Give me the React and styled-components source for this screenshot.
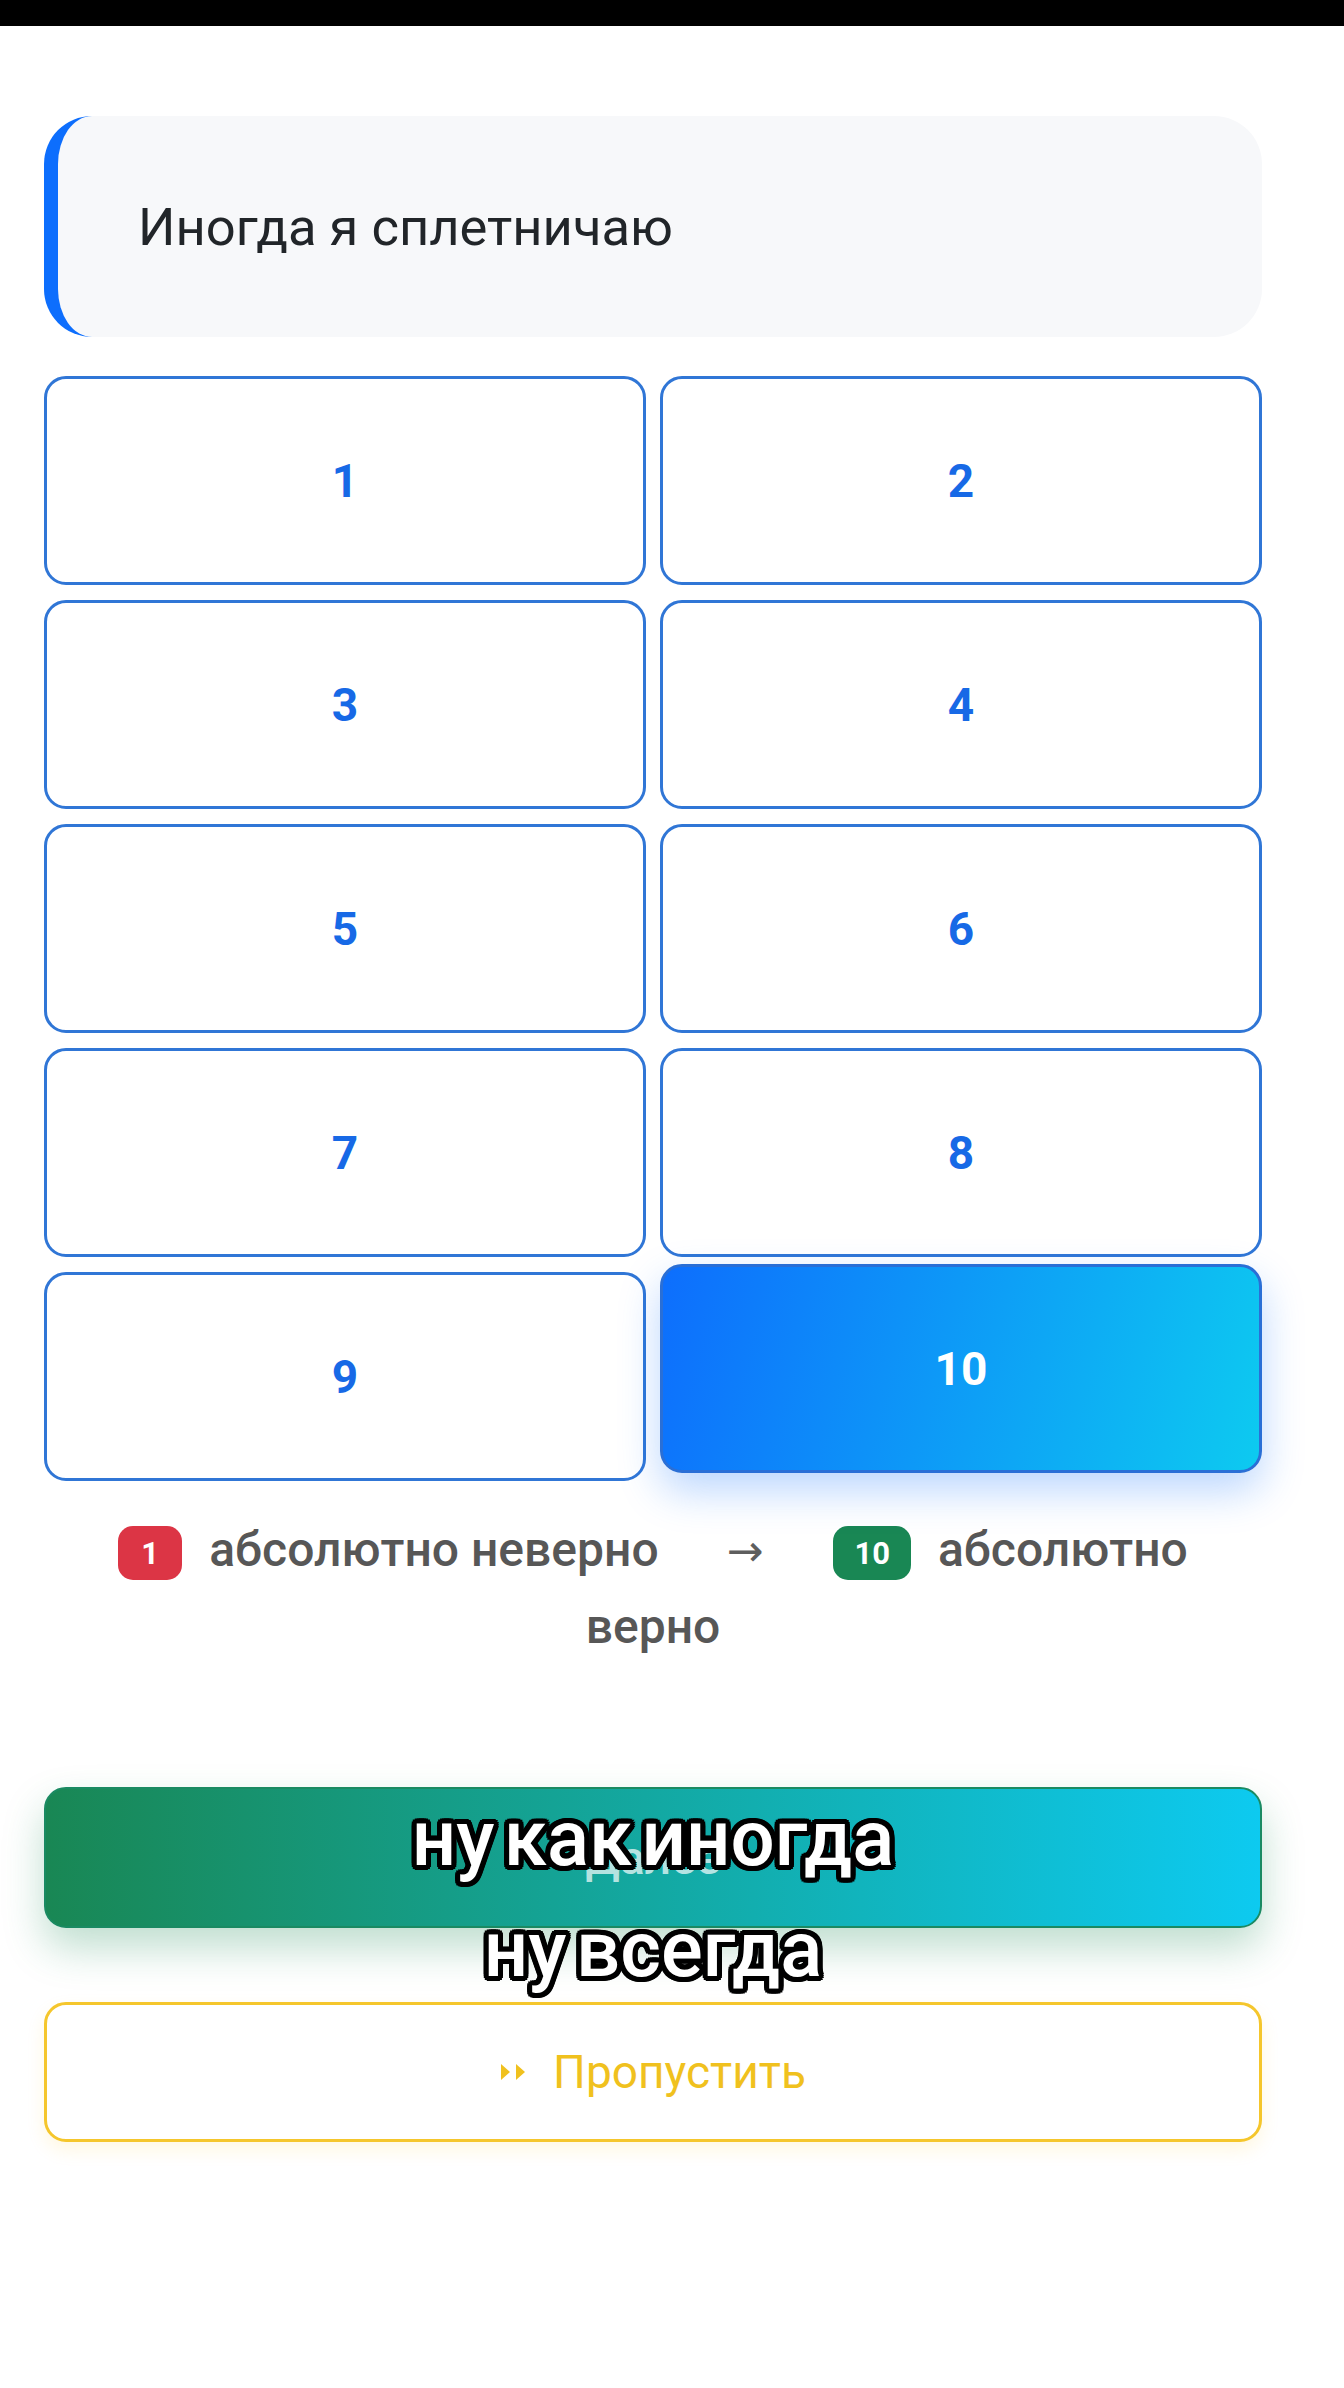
import React from 'react';
import styled, { createGlobalStyle, css } from 'styled-components';

const GlobalStyle = createGlobalStyle`
  html, body {
    margin: 0;
    padding: 0;
    background: #ffffff;
  }
  body {
    font-family: Roboto, 'Noto Sans', 'Liberation Sans', sans-serif;
    color: #212529;
  }
`;

const StatusBar = styled.div`
  height: 26px;
  background: #000;
`;

const Page = styled.div`
  padding: 90px 82px 120px 44px;
`;

const QuestionCard = styled.div`
  box-sizing: border-box;
  height: 221px;
  display: flex;
  align-items: center;
  padding-left: 80px;
  background: #f7f8fa;
  border-left: 14px solid #0d6efd;
  border-radius: 48px;
  font-size: 52.5px;
  color: #212529;
`;

const OptionsGrid = styled.div`
  margin-top: 39px;
  display: grid;
  grid-template-columns: 1fr 1fr;
  column-gap: 14px;
  row-gap: 15px;
`;

const OptionButton = styled.button`
  box-sizing: border-box;
  height: 209px;
  border: 3px solid #3076d6;
  border-radius: 22px;
  background: #fff;
  color: #1769e6;
  font-family: Roboto, sans-serif;
  font-weight: 700;
  font-size: 46px;
  cursor: pointer;

  ${(p) =>
    p.$active &&
    css`
      background: linear-gradient(105deg, #0d6efd 0%, #0dcaf0 100%);
      border-color: #2a6fd6;
      color: #fff;
      transform: translateY(-8px);
      box-shadow: 0 18px 42px rgba(13, 110, 253, 0.28);
    `}
`;

const Legend = styled.div`
  margin-top: 31px;
  padding: 0 40px;
  text-align: center;
  font-size: 48px;
  font-weight: 500;
  line-height: 76px;
  color: #575757;
`;

const Badge = styled.span`
  display: inline-flex;
  align-items: center;
  justify-content: center;
  box-sizing: border-box;
  height: 54px;
  min-width: 64px;
  padding: 0 21px;
  margin-right: 27px;
  border-radius: 15px;
  background: ${(p) => p.$bg};
  color: #fff;
  font-size: 31px;
  font-weight: 700;
  line-height: 1;
  vertical-align: middle;
`;

const Arrow = styled.span`
  display: inline-block;
  margin: 0 58px 0 56px;
  font-family: 'DejaVu Sans', sans-serif;
  font-size: 44px;
  font-weight: 400;
  color: #5e5e5e;
`;

const Actions = styled.div`
  position: relative;
  margin-top: 122px;
  display: flex;
  flex-direction: column;
  gap: 74px;
`;

const NextButton = styled.button`
  box-sizing: border-box;
  height: 141px;
  border: 2px solid #1a8a62;
  border-radius: 22px;
  background: linear-gradient(90deg, #198754 0%, #0dcaf0 100%);
  box-shadow: 0 20px 40px rgba(25, 135, 84, 0.28);
  color: rgba(255, 255, 255, 0.7);
  font-family: Roboto, sans-serif;
  font-size: 46px;
  font-weight: 500;
`;

const SkipButton = styled.button`
  box-sizing: border-box;
  height: 140px;
  display: flex;
  align-items: center;
  justify-content: center;
  gap: 27px;
  border: 3px solid #f5c62c;
  border-radius: 22px;
  background: #fff;
  box-shadow: 0 8px 18px rgba(255, 193, 7, 0.12);
  color: #f0c11e;
  font-family: Roboto, sans-serif;
  font-size: 46px;
  font-weight: 400;
`;

/* video caption lying over the buttons */
const Caption = styled.div`
  position: absolute;
  top: -4px;
  left: 0;
  right: 0;
  text-align: center;
  pointer-events: none;
  font-family: Roboto, sans-serif;
  font-weight: 500;
  font-size: 78px;
  line-height: 111px;
  word-spacing: -10px;
  color: #fff;
  text-shadow:
    5px 0 0 #000, -5px 0 0 #000, 0 5px 0 #000, 0 -5px 0 #000,
    4px 4px 0 #000, -4px 4px 0 #000, 4px -4px 0 #000, -4px -4px 0 #000,
    5px 2px 0 #000, -5px 2px 0 #000, 5px -2px 0 #000, -5px -2px 0 #000,
    2px 5px 0 #000, -2px 5px 0 #000, 2px -5px 0 #000, -2px -5px 0 #000;
`;

const SkipIcon = () => (
  <svg width="26" height="18" viewBox="0 0 26 18" fill="#f0c11e">
    <polygon points="1,1 10,9 1,17" />
    <polygon points="16,1 25,9 16,17" />
  </svg>
);

const options = [1, 2, 3, 4, 5, 6, 7, 8, 9, 10];

export default function App() {
  const selected = 10;
  return (
    <>
      <GlobalStyle />
      <StatusBar />
      <Page>
        <QuestionCard>Иногда я сплетничаю</QuestionCard>

        <OptionsGrid>
          {options.map((n) => (
            <OptionButton key={n} $active={n === selected}>
              {n}
            </OptionButton>
          ))}
        </OptionsGrid>

        <Legend>
          <Badge $bg="#dc3545">1</Badge>абсолютно неверно <Arrow>→</Arrow>{' '}
          <Badge $bg="#198754">10</Badge>абсолютно верно
        </Legend>

        <Actions>
          <NextButton>Далее</NextButton>
          <SkipButton>
            <SkipIcon />
            Пропустить
          </SkipButton>
          <Caption>
            ну как иногда
            <br />
            ну всегда
          </Caption>
        </Actions>
      </Page>
    </>
  );
}
